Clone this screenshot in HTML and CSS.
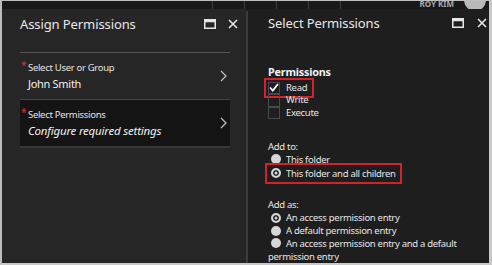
FILE: index.html
```html
<!DOCTYPE html>
<html>
<head>
<meta charset="utf-8">
<link rel="stylesheet" href="styles.css">
</head>
<body>
<div class="screen">
  <div class="topbar">
    <div class="top-fill"></div>
    <div class="top-seg"></div>
    <div class="top-seg"></div>
    <div class="top-seg"></div>
    <div class="top-seg"></div>
    <div class="top-user">
      <span class="user-name">ROY KIM</span>
      <span class="avatar"></span>
    </div>
  </div>
  <div class="panels">
    <section class="panel panel-left">
      <header class="panel-head">
        <h1 class="panel-title">Assign Permissions</h1>
        <div class="head-icons">
          <svg class="ico" width="12" height="10" viewBox="0 0 12 10"><rect x="0.75" y="0.75" width="10.5" height="8.5" fill="none" stroke="#e6e6e6" stroke-width="1.5"/><rect x="0.75" y="0.75" width="10.5" height="2.5" fill="#e6e6e6"/></svg>
          <svg class="ico" width="10" height="10" viewBox="0 0 10 10"><path d="M1 1L9 9M9 1L1 9" stroke="#e6e6e6" stroke-width="1.6" fill="none"/></svg>
        </div>
      </header>
      <div class="list">
        <div class="item">
          <div class="item-text">
            <div class="item-label"><span class="req">*</span>Select User or Group</div>
            <div class="item-value">John Smith</div>
          </div>
          <svg class="chev" width="7" height="12" viewBox="0 0 7 12"><path d="M1 1L6 6L1 11" stroke="#bdbdbd" stroke-width="1.3" fill="none"/></svg>
        </div>
        <div class="item item-active">
          <div class="item-text">
            <div class="item-label"><span class="req">*</span>Select Permissions</div>
            <div class="item-value item-italic">Configure required settings</div>
          </div>
          <svg class="chev" width="7" height="12" viewBox="0 0 7 12"><path d="M1 1L6 6L1 11" stroke="#bdbdbd" stroke-width="1.3" fill="none"/></svg>
        </div>
      </div>
    </section>
    <div class="divider"></div>
    <section class="panel panel-right">
      <header class="panel-head">
        <h1 class="panel-title">Select Permissions</h1>
        <div class="head-icons">
          <svg class="ico" width="12" height="10" viewBox="0 0 12 10"><rect x="0.75" y="0.75" width="10.5" height="8.5" fill="none" stroke="#e6e6e6" stroke-width="1.5"/><rect x="0.75" y="0.75" width="10.5" height="2.5" fill="#e6e6e6"/></svg>
          <svg class="ico" width="10" height="10" viewBox="0 0 10 10"><path d="M1 1L9 9M9 1L1 9" stroke="#e6e6e6" stroke-width="1.6" fill="none"/></svg>
        </div>
      </header>
      <div class="form">
        <h2 class="group-title">Permissions</h2>
        <div class="checks">
          <div class="check-row highlight">
            <span class="box checked"><svg width="10" height="9" viewBox="0 0 10 9"><path d="M1 4.5L3.8 7.5L9 1" stroke="#ffffff" stroke-width="1.8" fill="none"/></svg></span>
            <span class="check-label">Read</span>
          </div>
          <div class="check-row">
            <span class="box"></span>
            <span class="check-label">Write</span>
          </div>
          <div class="check-row">
            <span class="box"></span>
            <span class="check-label">Execute</span>
          </div>
        </div>

        <div class="field-label add-to">Add to:</div>
        <div class="radios">
          <div class="radio-row"><span class="radio"></span>This folder</div>
          <div class="radio-row highlight highlight-radio"><span class="radio on"></span>This folder and all children</div>
        </div>

        <div class="field-label add-as">Add as:</div>
        <div class="radios">
          <div class="radio-row"><span class="radio on"></span>An access permission entry</div>
          <div class="radio-row"><span class="radio"></span>A default permission entry</div>
          <div class="radio-row wrap"><span class="radio"></span>An access permission entry and a default permission entry</div>
        </div>
      </div>
    </section>
  </div>
</div>
</body>
</html>
```
FILE: styles.css
```css
* { box-sizing: border-box; }
html, body { margin: 0; padding: 0; }
body {
  width: 492px;
  height: 265px;
  overflow: hidden;
  background: #c9c9c9;
  font-family: "Noto Sans", "Open Sans", sans-serif;
}
.screen {
  width: 492px;
  height: 265px;
  border-top: 1px solid #bdbdbd;
  border-left: 2px solid #bdbdbd;
  border-right: 3px solid #c9c9c9;
  border-bottom: 2px solid #c9c9c9;
  display: flex;
  flex-direction: column;
  background: #1e1e1e;
  overflow: hidden;
}
.topbar {
  height: 8px;
  flex: none;
  display: flex;
  background: #191919;
  overflow: hidden;
}
.top-fill { width: 210px; }
.top-seg {
  width: 32px;
  border-left: 1px solid #3a3a3a;
}
.top-user {
  flex: 1;
  border-left: 1px solid #3a3a3a;
  display: flex;
  justify-content: flex-end;
  align-items: flex-end;
  padding-right: 3px;
}
.user-name {
  font-size: 8px;
  line-height: 8px;
  color: #aaaaaa;
  font-weight: bold;
  margin-right: 10px;
  margin-bottom: 1px;
}
.avatar {
  width: 22px;
  height: 22px;
  border-radius: 50%;
  background: #b9b9b9;
  margin-bottom: -2px;
}
.panels {
  flex: 1;
  display: flex;
  min-height: 0;
}
.panel { display: flex; flex-direction: column; }
.panel-left {
  width: 244px;
  background: #262626;
  padding: 0 16px 0 18px;
}
.divider {
  width: 2px;
  background: #3c3c3c;
  margin-top: 2px;
}
.panel-right {
  flex: 1;
  background: #1e1e1e;
  padding: 0 0 0 20px;
}
.panel-head {
  height: 29px;
  display: flex;
  align-items: center;
  justify-content: space-between;
}
.panel-left .panel-head { margin-right: -10px; }
.panel-title {
  margin: 0;
  font-size: 13px;
  font-weight: 400;
  letter-spacing: -0.1px;
  color: #e8e8e8;
}
.head-icons {
  display: flex;
  align-items: center;
  gap: 12px;
  padding-right: 2px;
}
.panel-right .head-icons { gap: 13px; }
.ico { display: block; }

.list {
  margin-top: 14px;
  border-top: 1px solid #555555;
}
.item {
  height: 47px;
  display: flex;
  align-items: center;
  justify-content: space-between;
  padding: 0 3px 0 0;
  border-bottom: 1px solid #444444;
}
.item-active {
  background: #141414;
  border-bottom: 2px solid #383838;
  height: 48px;
}
.item-text { padding-left: 1px; }
.item-label {
  font-size: 9.5px;
  letter-spacing: -0.3px;
  color: #e4e4e4;
  line-height: 14px;
  position: relative;
  padding-left: 7px;
}
.req {
  position: absolute;
  left: 0;
  top: -3px;
  color: #e03030;
  font-size: 10px;
}
.item-value {
  font-size: 11px;
  letter-spacing: -0.3px;
  color: #f0f0f0;
  line-height: 17px;
  padding-left: 7px;
}
.item-italic {
  font-style: italic;
  font-size: 11.5px;
  letter-spacing: -0.2px;
}
.chev { display: block; }

.form {
  padding-top: 27px;
  color: #e6e6e6;
  font-size: 9.5px;
  letter-spacing: -0.3px;
}
.group-title {
  margin: 0 0 4px;
  font-size: 10.8px;
  letter-spacing: -0.2px;
  font-weight: bold;
  color: #f2f2f2;
  line-height: 13px;
}
.checks { display: flex; flex-direction: column; align-items: flex-start; }
.check-row {
  display: flex;
  align-items: center;
  height: 12.5px;
  gap: 6px;
}
.box {
  width: 12px;
  height: 12.5px;
  border: 1px solid #4a4a4a;
  display: flex;
  align-items: center;
  justify-content: center;
}
.box.checked { border-color: #5a3a6a; }
.check-label { line-height: 12px; }
.highlight {
  outline: 2px solid #d0242a;
}
.check-row.highlight {
  outline-offset: 2px;
  padding-right: 3px;
}

.field-label { line-height: 13px; }
.add-to { margin-top: 20.5px; }
.add-as { margin-top: 17.5px; }
.radios { display: flex; flex-direction: column; align-items: flex-start; }
.radio-row {
  display: flex;
  align-items: center;
  line-height: 13px;
  gap: 5px;
  padding-left: 3px;
}
.radio-row.highlight-radio {
  outline: 2px solid #d0242a;
  outline-offset: 1px;
  padding: 1px 3px 1px 3px;
}
.radio {
  flex: none;
  width: 10px;
  height: 10px;
  border-radius: 50%;
  background: #d6d6d6;
}
.radio.on {
  border: 2px solid #d6d6d6;
  box-shadow: inset 0 0 0 1.5px #1e1e1e;
  background-color: #d6d6d6;
}
.radio-row.wrap {
  display: block;
  padding-left: 0;
}
.radio-row.wrap .radio {
  display: inline-block;
  vertical-align: -1px;
  margin: 0 5px 0 3px;
}
```
